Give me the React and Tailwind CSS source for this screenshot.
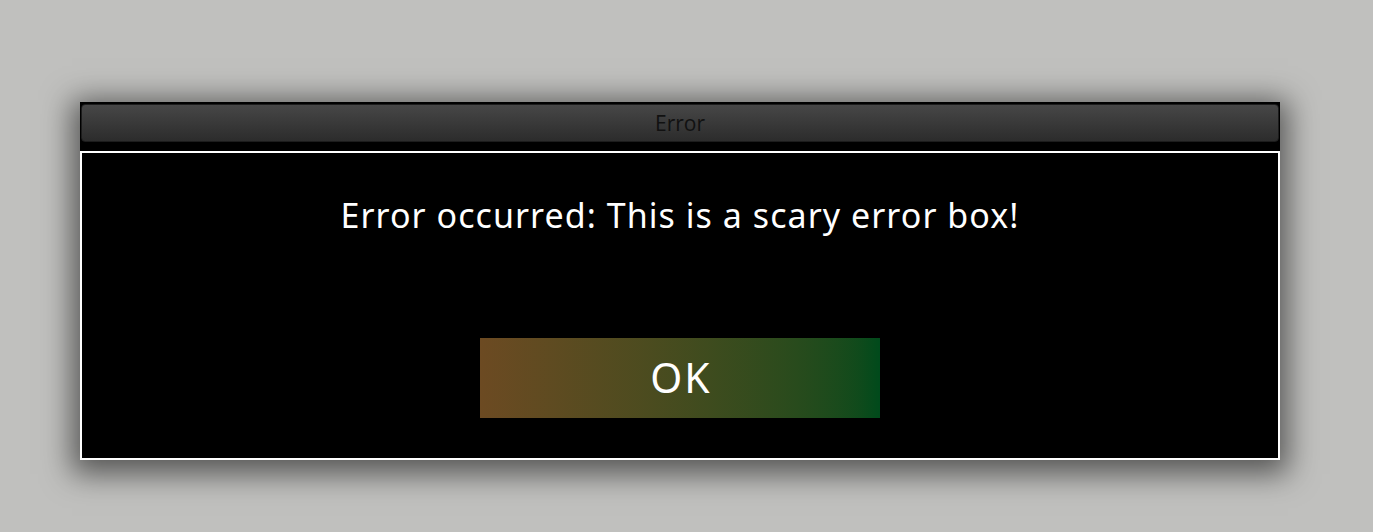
export default function App() {
  return (
    <div className="w-[1373px] h-[532px] bg-[#c0c0be] pt-[102px] pl-[80px] overflow-hidden">
      <div className="w-[1200px] bg-black shadow-[0_6px_28px_8px_rgba(0,0,0,0.55)]">
        <div className="px-[1px] pt-[2px] pb-[9px]">
          <div className="h-[38px] rounded-[4px] border border-[#1c1c1c] bg-gradient-to-b from-[#474747] to-[#2c2c2c] flex items-center justify-center">
            <span className="text-[21px] text-[#111] leading-none" style={{ fontFamily: '"Open Sans", "Noto Sans", sans-serif' }}>Error</span>
          </div>
        </div>
        <div className="h-[309px] border-2 border-white flex flex-col items-center pt-[42px]">
          <div className="text-white text-[34px] leading-[40px] tracking-[1.05px]" style={{ fontFamily: '"Noto Sans", sans-serif' }}>
            Error occurred: This is a scary error box!
          </div>
          <button className="mt-[103px] w-[400px] h-[80px] bg-gradient-to-r from-[#6c4a22] to-[#004a1b] text-white text-[41px] tracking-[2px] flex items-center justify-center" style={{ fontFamily: '"Noto Sans", sans-serif' }}>
            <span className="pl-[2px]">OK</span>
          </button>
        </div>
      </div>
    </div>
  );
}
